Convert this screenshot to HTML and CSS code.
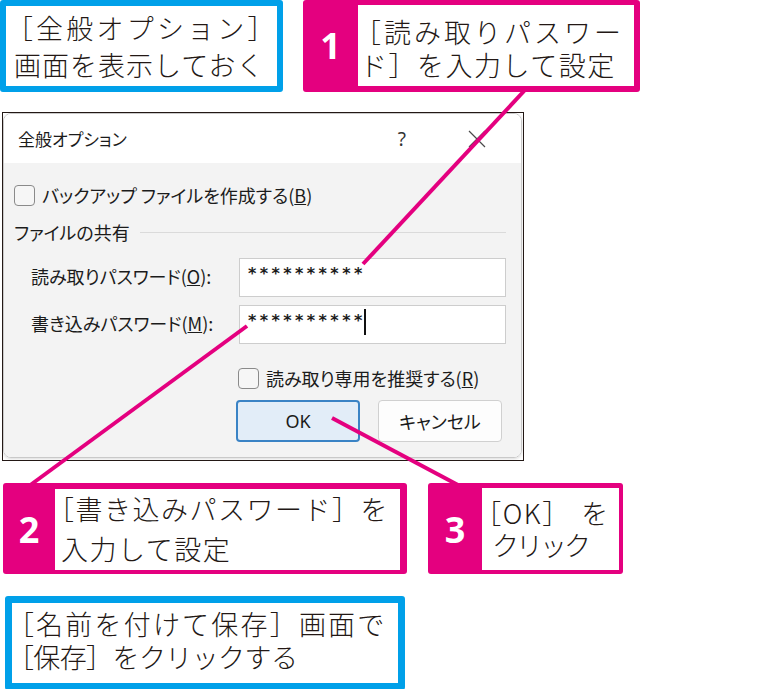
FILE: index.html
```html
<!DOCTYPE html>
<html lang="ja">
<head>
    <meta charset="UTF-8">
    <meta name="viewport" content="width=device-width, initial-scale=1.0">
    <title>全般オプション</title>
    <link rel="stylesheet" href="styles.css">
</head>
<body>
    <div class="page">
        <div class="top-row">
            <div class="note note-top">
                <span class="loose"><span class="ob">［</span>全般オプション］</span><br>画面を表示しておく
            </div>
            <div class="callout callout-1">
                <div class="num">1</div>
                <div class="callout-text"><span class="loose"><span class="ob">［</span>読み取りパスワー</span><br>ド］を入力して設定</div>
            </div>
        </div>

        <!-- ダイアログのスクリーンショット -->
        <div class="shot">
            <div class="dialog">
                <div class="title-bar">
                    <span class="title">全般オプション</span>
                    <span class="help">?</span>
                    <svg class="close" width="18" height="18" viewBox="0 0 18 18">
                        <path d="M1 1 L17 17 M17 1 L1 17" stroke="#4a4a4a" stroke-width="1.2" fill="none"/>
                    </svg>
                </div>
                <div class="dialog-body">
                    <div class="check-row">
                        <span class="checkbox"></span>
                        <span>バックアップ ファイルを作成する(<u>B</u>)</span>
                    </div>
                    <div class="group-title">
                        <span>ファイルの共有</span>
                        <span class="group-line"></span>
                    </div>
                    <div class="field-row">
                        <span class="field-label">読み取りパスワード(<u>O</u>):</span>
                        <div class="input"><span class="stars">**********</span></div>
                    </div>
                    <div class="field-row">
                        <span class="field-label">書き込みパスワード(<u>M</u>):</span>
                        <div class="input"><span class="stars">**********</span><span class="caret"></span></div>
                    </div>
                    <div class="check-row check-readonly">
                        <span class="checkbox"></span>
                        <span>読み取り専用を推奨する(<u>R</u>)</span>
                    </div>
                    <div class="buttons">
                        <button class="btn btn-ok">OK</button>
                        <button class="btn">キャンセル</button>
                    </div>
                </div>
            </div>
        </div>

        <div class="bottom-row">
            <div class="callout callout-2">
                <div class="num">2</div>
                <div class="callout-text"><span class="ob">［</span>書き込みパスワード］を<br>入力して設定</div>
            </div>
            <div class="callout callout-3">
                <div class="num">3</div>
                <div class="callout-text"><span class="ob">［</span>OK<span class="gap">］</span>を<br><span class="tight">クリック</span></div>
            </div>
        </div>

        <div class="note note-bottom">
            <span class="ob">［</span>名前を付けて保存］画面で<br><span class="tight"><span class="ob">［</span>保存］をクリックする</span>
        </div>

        <!-- 引き出し線 -->
        <svg class="leaders" width="783" height="689" viewBox="0 0 783 689">
            <g stroke="#e4007f" stroke-width="4" fill="none">
                <line x1="525" y1="90" x2="363" y2="264"/>
                <line x1="247" y1="326" x2="29" y2="486"/>
                <line x1="332" y1="418" x2="458" y2="485"/>
            </g>
        </svg>
    </div>
</body>
</html>
```

FILE: styles.css
```css
* {
    margin: 0;
    padding: 0;
    box-sizing: border-box;
}

body {
    background: #fff;
    font-family: "Noto Sans CJK JP", "Noto Sans", sans-serif;
    color: #231815;
    overflow: hidden;
}

.page {
    position: relative;
    width: 783px;
    height: 689px;
}

/* 行頭の括弧は前アキを詰める */
.ob {
    margin-left: -0.3em;
}

.top-row {
    display: flex;
    gap: 20px;
    height: 92px;
}

.note {
    border: 6px solid #00a0e9;
    border-radius: 3px;
    background: #fff;
    font-size: 27px;
    font-weight: 300;
    white-space: nowrap;
}

.note-top {
    width: 283px;
    padding: 3px 0 0 8px;
    line-height: 37px;
    letter-spacing: 1px;
}

.note-top .loose {
    letter-spacing: 3.2px;
}

.note-bottom {
    width: 400px;
    height: 94px;
    margin: 22px 0 0 5px;
    border-width: 7px;
    padding: 4px 0 0 3px;
    line-height: 33px;
    letter-spacing: 2.2px;
}

.note-bottom .tight {
    letter-spacing: -0.6px;
}

/* 番号付きの吹き出し */
.callout {
    display: flex;
    background: #e4007f;
    border-radius: 3px;
    height: 92px;
}

.callout .num {
    display: flex;
    align-items: center;
    justify-content: center;
    color: #fff;
    font-family: "Noto Sans", sans-serif;
    font-weight: 700;
    font-size: 36px;
}

.callout-text {
    flex: 1;
    background: #fff;
    font-size: 27px;
    font-weight: 300;
    letter-spacing: 1.5px;
    white-space: nowrap;
}

.callout-1 {
    width: 337px;
    padding: 5px 6px 6px 0;
}

.callout-1 .num {
    width: 55px;
}

.callout-1 .callout-text {
    padding: 10px 0 0 2px;
    line-height: 33px;
}

.callout-1 .ob {
    margin-left: -0.22em;
}

.callout-1 .loose {
    letter-spacing: 3px;
}

.bottom-row {
    display: flex;
    gap: 21px;
    margin: 22px 0 0 3px;
    height: 91px;
}

.callout-2 {
    width: 404px;
    height: 91px;
    padding: 6px 7px 4px 0;
}

.callout-2 .num {
    width: 52px;
}

.callout-2 .callout-text {
    padding: 0 0 0 6px;
    line-height: 40px;
}

.callout-2 .ob {
    margin-left: -0.52em;
}

.callout-3 {
    width: 195px;
    height: 91px;
    padding: 5px 4px 4px 0;
}

.callout-3 .num {
    width: 54px;
}

.callout-3 .callout-text {
    padding: 9px 0 0 10px;
    line-height: 32px;
}

.callout-3 .ob {
    margin-left: -0.66em;
}

.callout-3 .gap {
    letter-spacing: 12px;
}

.callout-3 .tight {
    letter-spacing: -3px;
}

/* ダイアログ */
.shot {
    width: 522px;
    height: 349px;
    margin: 20px 0 0 2px;
    border: 1px solid #231815;
    background: #fff;
    overflow: hidden;
}

.dialog {
    width: 519px;
    height: 345px;
    border: 1px solid #c9c9c9;
    border-radius: 8px;
    overflow: hidden;
    box-shadow: 0 1px 3px rgba(0, 0, 0, 0.15);
    font-size: 18px;
    font-feature-settings: "palt";
    color: #1b1b1b;
}

.title-bar {
    display: flex;
    align-items: center;
    height: 49px;
    padding-left: 14px;
    background: #fff;
    font-size: 17px;
}

.title {
    flex: 1;
}

.help {
    font-family: "Noto Sans", sans-serif;
    font-size: 19px;
    color: #333;
    margin-right: 62px;
}

.close {
    margin-right: 35px;
}

.dialog-body {
    height: 294px;
    background: #f3f3f3;
    padding: 20px 15px 0 10px;
}

.check-row {
    display: flex;
    align-items: center;
    gap: 7px;
    height: 24px;
}

.checkbox {
    width: 21px;
    height: 21px;
    border: 1px solid #8a8a8a;
    border-radius: 4px;
    background: #f6f6f6;
}

.group-title {
    display: flex;
    align-items: center;
    height: 24px;
    margin-top: 13px;
}

.group-line {
    flex: 1;
    height: 1px;
    margin-left: 10px;
    background: #dadada;
}

.field-row {
    display: flex;
    align-items: center;
    margin-top: 14px;
}

.field-row + .field-row {
    margin-top: 8px;
}

.field-label {
    width: 225px;
    padding-left: 17px;
    padding-bottom: 4px;
}

.input {
    display: flex;
    align-items: flex-start;
    width: 267px;
    height: 39px;
    padding: 5px 0 0 8px;
    background: #fff;
    border: 1px solid #cdcdcd;
}

.stars {
    font-family: "DejaVu Sans", sans-serif;
    font-weight: 700;
    font-size: 16px;
    letter-spacing: 3.4px;
    line-height: 20px;
}

.caret {
    width: 2px;
    height: 26px;
    margin: -2px 0 0 -2px;
    background: #111;
}

.check-readonly {
    margin: 22px 0 0 224px;
}

.buttons {
    display: flex;
    gap: 18px;
    margin: 10px 0 0 222px;
}

.btn {
    width: 124px;
    height: 42px;
    border: 1px solid #d0d0d0;
    border-radius: 4px;
    background: #fdfdfd;
    font-family: inherit;
    font-size: 18px;
    font-feature-settings: "palt";
    color: #1b1b1b;
}

.btn-ok {
    border: 2px solid #3a83c5;
    background: #e2edf8;
    font-family: "Noto Sans", sans-serif;
}

.leaders {
    position: absolute;
    top: 0;
    left: 0;
    pointer-events: none;
}
```
